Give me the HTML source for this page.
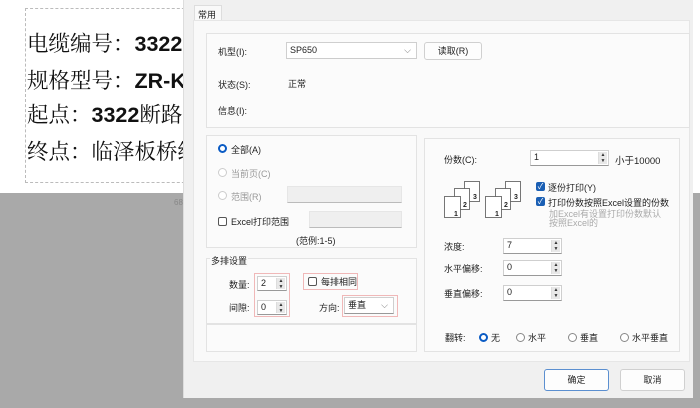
<!DOCTYPE html>
<html><head><meta charset="utf-8"><style>
*{box-sizing:border-box;margin:0;padding:0}
body{width:700px;height:408px;position:relative;overflow:hidden;background:#a9a9a9;font-family:"Liberation Sans","Noto Sans CJK SC",sans-serif;font-size:9px;color:#222}
.a{position:absolute}
.big{font-size:21.5px;color:#111;font-family:"Liberation Serif","Noto Serif CJK SC",serif;white-space:nowrap}
.big b{font-family:"Liberation Sans",sans-serif}
.grp{position:absolute;background:#fbfbfb;border:1px solid #e3e3e3}
.in{position:absolute;background:#fff;border:1px solid #cfcfcf;border-bottom:1px solid #999;padding-left:3px;line-height:13px}
.dis{position:absolute;background:#efefef;border:1px solid #e6e6e6;border-bottom-color:#bbb}
.spn{position:absolute;right:1px;top:1px;bottom:1px;width:9px;background:#e8e8e8;border-left:1px solid #ddd;font-size:5px;line-height:6px;text-align:center;color:#333}
.rad{position:absolute;width:9px;height:9px;border-radius:50%;border:1px solid #888;background:#fff}
.rad.on{border:2.5px solid #0a5bc4}
.rad.off{border-color:#ccc}
.cb{position:absolute;width:9px;height:9px;border:1px solid #555;border-radius:2px;background:#fff}
.cb.on{background:#1a5fb4;border-color:#1a5fb4;color:#fff;font-size:8px;line-height:8px;text-align:center}
.btn{position:absolute;background:#fdfdfd;border:1px solid #d0d0d0;border-radius:3px;text-align:center}
.pink{position:absolute;border:1px solid #f0b8b8}
.g{color:#999}
</style></head><body>
<div class="a" style="left:0;top:0;width:700px;height:193px;background:#fff"></div>
<div class="a" style="left:25px;top:8px;width:170px;height:175px;border:1px dashed #bbb"></div>
<div class="a big" style="left:27px;top:27px">电缆编号：<b>3322C</b></div>
<div class="a big" style="left:27px;top:64px">规格型号：<b>ZR-KV</b></div>
<div class="a big" style="left:27px;top:98px">起点：<b>3322</b>断路器</div>
<div class="a big" style="left:27px;top:135px">终点：临泽板桥线</div>
<div class="a" style="left:174px;top:198px;color:#888;font-size:8px">68</div>

<div class="a" style="left:183px;top:0;width:510px;height:398px;background:#f0f0f0;border-left:1px solid #ddd"></div>
<div class="a" style="left:194px;top:5px;width:28px;height:16px;background:#f9f9f9;border:1px solid #ddd;border-bottom:none;padding:2px 0 0 3px">常用</div>
<div class="a" style="left:193px;top:20px;width:497px;height:342px;background:#f9f9f9;border:1px solid #e6e6e6"></div>

<div class="grp" style="left:206px;top:33px;width:484px;height:95px"></div>
<div class="a" style="left:218px;top:45px">机型(I):</div>
<div class="in" style="left:286px;top:42px;width:131px;height:17px;border-bottom-color:#ccc;line-height:15px">SP650<span style="position:absolute;right:5px;color:#777">⌵</span></div>
<div class="btn" style="left:424px;top:42px;width:58px;height:18px;line-height:16px">读取(R)</div>
<div class="a" style="left:218px;top:78px">状态(S):</div>
<div class="a" style="left:288px;top:77px">正常</div>
<div class="a" style="left:218px;top:104px">信息(I):</div>

<div class="grp" style="left:206px;top:135px;width:211px;height:113px"></div>
<div class="rad on" style="left:218px;top:144px"></div><div class="a" style="left:231px;top:143px">全部(A)</div>
<div class="rad off" style="left:218px;top:168px"></div><div class="a g" style="left:231px;top:167px">当前页(C)</div>
<div class="rad off" style="left:218px;top:191px"></div><div class="a g" style="left:231px;top:190px">范围(R)</div>
<div class="dis" style="left:287px;top:186px;width:115px;height:17px"></div>
<div class="cb" style="left:218px;top:217px"></div><div class="a" style="left:231px;top:215px">Excel打印范围</div>
<div class="dis" style="left:309px;top:211px;width:93px;height:17px"></div>
<div class="a" style="left:296px;top:234px">(范例:1-5)</div>

<div class="grp" style="left:206px;top:258px;width:211px;height:66px"></div>
<div class="grp" style="left:206px;top:324px;width:211px;height:28px"></div>
<div class="a" style="left:210px;top:254px;background:#f9f9f9;padding:0 1px">多排设置</div>
<div class="pink" style="left:254px;top:273px;width:36px;height:44px"></div>
<div class="a" style="left:229px;top:278px">数量:</div>
<div class="in" style="left:257px;top:276px;width:30px;height:15px">2<div class="spn">▲<br>▼</div></div>
<div class="a" style="left:229px;top:301px">间隙:</div>
<div class="in" style="left:257px;top:300px;width:30px;height:15px">0<div class="spn">▲<br>▼</div></div>
<div class="pink" style="left:303px;top:273px;width:55px;height:17px"></div>
<div class="cb" style="left:308px;top:277px"></div><div class="a" style="left:321px;top:275px">每排相同</div>
<div class="a" style="left:319px;top:301px">方向:</div>
<div class="pink" style="left:342px;top:295px;width:56px;height:22px"></div>
<div class="in" style="left:344px;top:297px;width:50px;height:17px;line-height:15px">垂直<span style="position:absolute;right:5px;color:#777">⌵</span></div>

<div class="grp" style="left:424px;top:138px;width:256px;height:214px"></div>
<div class="a" style="left:444px;top:153px">份数(C):</div>
<div class="in" style="left:530px;top:150px;width:79px;height:16px">1<div class="spn">▲<br>▼</div></div>
<div class="a" style="left:615px;top:153px;font-size:9.5px">小于10000</div>
<svg class="a" style="left:444px;top:181px" width="80" height="38" viewBox="0 0 80 38" fill="#fff" stroke="#555" stroke-width="0.8" font-size="7" font-family="Liberation Sans" font-weight="bold">
<rect x="20.5" y="0.5" width="15" height="20"/><rect x="10.5" y="7.5" width="15" height="21"/><rect x="0.5" y="15.5" width="16" height="21"/>
<text x="29" y="18" fill="#222" stroke="none">3</text><text x="19" y="26" fill="#222" stroke="none">2</text><text x="10" y="35" fill="#222" stroke="none">1</text>
<rect x="61.5" y="0.5" width="15" height="20"/><rect x="51.5" y="7.5" width="15" height="21"/><rect x="41.5" y="15.5" width="16" height="21"/>
<text x="70" y="18" fill="#222" stroke="none">3</text><text x="60" y="26" fill="#222" stroke="none">2</text><text x="51" y="35" fill="#222" stroke="none">1</text>
</svg>
<div class="cb on" style="left:536px;top:182px">✓</div><div class="a" style="left:548px;top:181px">逐份打印(Y)</div>
<div class="cb on" style="left:536px;top:197px">✓</div><div class="a" style="left:548px;top:196px">打印份数按照Excel设置的份数</div>
<div class="a" style="left:549px;top:210px;color:#aaa;line-height:9px;width:112px">加Excel有设置打印份数默认按照Excel的</div>
<div class="a" style="left:444px;top:240px">浓度:</div>
<div class="in" style="left:503px;top:238px;width:59px;height:16px">7<div class="spn">▲<br>▼</div></div>
<div class="a" style="left:444px;top:262px">水平偏移:</div>
<div class="in" style="left:503px;top:260px;width:59px;height:16px">0<div class="spn">▲<br>▼</div></div>
<div class="a" style="left:444px;top:287px">垂直偏移:</div>
<div class="in" style="left:503px;top:285px;width:59px;height:16px">0<div class="spn">▲<br>▼</div></div>
<div class="a" style="left:445px;top:331px">翻转:</div>
<div class="rad on" style="left:479px;top:333px"></div><div class="a" style="left:491px;top:331px">无</div>
<div class="rad" style="left:516px;top:333px"></div><div class="a" style="left:528px;top:331px">水平</div>
<div class="rad" style="left:568px;top:333px"></div><div class="a" style="left:580px;top:331px">垂直</div>
<div class="rad" style="left:620px;top:333px"></div><div class="a" style="left:632px;top:331px">水平垂直</div>

<div class="btn" style="left:544px;top:369px;width:65px;height:22px;line-height:20px;border:1.5px solid #5b8fd0">确定</div>
<div class="btn" style="left:620px;top:369px;width:65px;height:22px;line-height:20px">取消</div>
</body></html>
